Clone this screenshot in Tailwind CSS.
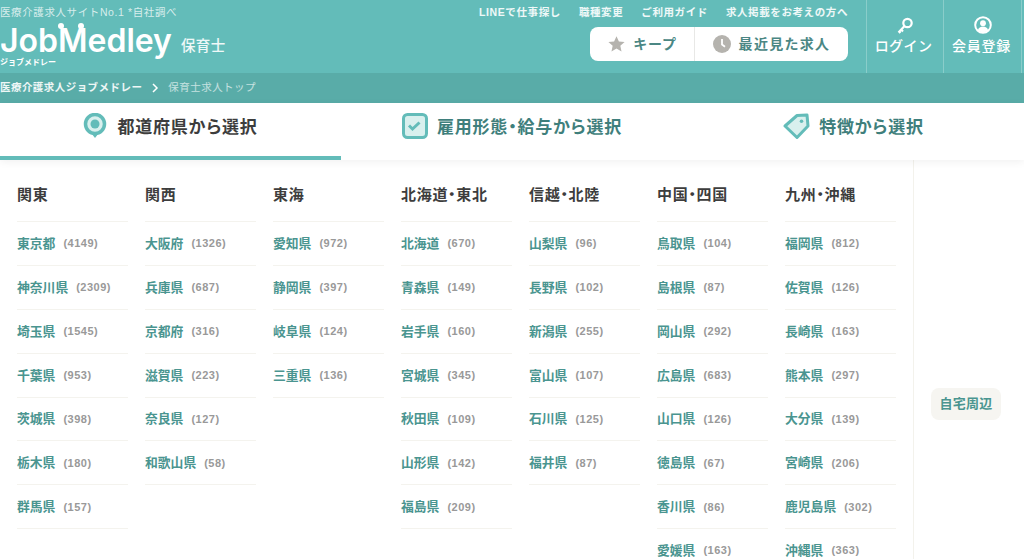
<!DOCTYPE html>
<html lang="ja">
<head>
<meta charset="utf-8">
<script src="https://cdn.jsdelivr.net/npm/@tailwindcss/browser@4"></script>
</head>
<body class="bg-white font-['Liberation_Sans','Noto_Sans_CJK_JP',sans-serif]">
<div class="w-[1024px] h-[559px] overflow-hidden flex flex-col">
  <header class="h-[73px] shrink-0 bg-[#63bcb9] flex text-white">
    <div class="w-[475px] shrink-0">
      <p class="text-[10.5px] leading-none pt-[7px] text-white/75 tracking-[0.6px] whitespace-nowrap">医療介護求人サイトNo.1 *自社調べ</p>
      <div class="flex items-end mt-[6px] h-[34px]">
        <span class="relative font-['Inter',sans-serif] font-semibold text-[32px] leading-[34px] whitespace-nowrap">JobMedley<span class="absolute left-[58px] top-[-1px] w-[6px] h-[6px] rounded-full bg-white"></span><span class="absolute left-[78px] top-[-1px] w-[6px] h-[6px] rounded-full bg-white"></span></span>
        <span class="ml-[9px] mb-[3px] text-[14.5px] leading-[18px] font-medium text-white/90 tracking-[0.4px]">保育士</span>
      </div>
      <p class="text-[8px] leading-none font-bold mt-[1px] whitespace-nowrap">ジョブメドレー</p>
    </div>
    <div class="w-[373px] shrink-0 flex flex-col items-end">
      <nav class="flex gap-[18px] pt-[7px] text-[10.5px] leading-[11px] font-bold tracking-[0.6px] text-white/90 whitespace-nowrap">
        <a>LINEで仕事探し</a><a>職種変更</a><a>ご利用ガイド</a><a>求人掲載をお考えの方へ</a>
      </nav>
      <div class="mt-[9px] w-[258px] h-[34px] bg-white rounded-[8px] flex text-[14px] font-bold text-[#4b8784] tracking-[0.8px]">
        <div class="w-[105px] flex items-center justify-center gap-[7px] border-r border-[#e8e8e6]">
          <svg class="w-[19px] h-[18px]" viewBox="0 0 24 24" fill="#b5b3ae"><path d="M12 1.500l3.200 7 7.600.8-5.700 5.100 1.600 7.600-6.700-3.900-6.700 3.900 1.600-7.600L1.200 9.300l7.600-.8z"/></svg>
          <span>キープ</span>
        </div>
        <div class="flex-1 flex items-center justify-center gap-[8px]">
          <svg class="w-[18px] h-[18px]" viewBox="0 0 18 18"><circle cx="9" cy="9" r="9" fill="#b5b3ae"/><path d="M9 4v5.500l3 2.200" fill="none" stroke="#fff" stroke-width="1.800"/></svg>
          <span class="tracking-[1.3px]">最近見た求人</span>
        </div>
      </div>
    </div>
    <div class="w-[18px] shrink-0"></div>
    <div class="w-[77px] shrink-0 border-l border-white/25 flex flex-col items-center">
      <svg class="w-[18px] h-[18px] mt-[16px] ml-[-1px]" viewBox="0 0 18 18" fill="none" stroke="#fff" stroke-width="2.200"><circle cx="11.500" cy="7" r="4.200"/><path d="M8.300 10.200L2.500 16.500M5 13.500l2 2M2.800 15.300l1.600 1.700"/></svg>
      <span class="text-[14px] leading-[18px] mt-[3px] mr-[3px] font-medium tracking-[0.4px] whitespace-nowrap">ログイン</span>
    </div>
    <div class="w-[79px] shrink-0 border-x border-white/25 flex flex-col items-center">
      <svg class="w-[18px] h-[18px] mt-[16px]" viewBox="0 0 18 18"><circle cx="9" cy="9" r="7.800" fill="none" stroke="#fff" stroke-width="2"/><circle cx="9" cy="7.200" r="2.900" fill="#fff"/><path d="M3.800 14.500c.7-3 2.800-4 5.200-4s4.500 1 5.200 4C12.500 16.500 5.500 16.500 3.800 14.500z" fill="#fff"/></svg>
      <span class="text-[14px] leading-[18px] mt-[3px] mr-[2px] font-medium tracking-[0.7px] whitespace-nowrap">会員登録</span>
    </div>
  </header>

  <div class="h-[30px] shrink-0 bg-[#59aca8] flex items-center text-[10.5px] tracking-[0.45px] whitespace-nowrap">
    <span class="font-bold text-white/90">医療介護求人ジョブメドレー</span>
    <svg class="w-[8px] h-[10px] mx-[9px]" viewBox="0 0 8 10" fill="none" stroke="#fff" stroke-width="1.500"><path d="M2 1l4 4-4 4"/></svg>
    <span class="text-white/65">保育士求人トップ</span>
  </div>

  <nav class="h-[57px] shrink-0 flex bg-white relative z-10 shadow-[0_2px_8px_rgba(0,0,0,0.06)] text-[17px] font-bold tracking-[0.8px] whitespace-nowrap [font-feature-settings:'palt']">
    <div class="w-[341px] flex items-start justify-center gap-[10px] pt-[10px] border-b-4 border-[#63bcb9] text-[#3d3d3d]">
      <svg class="w-[24px] h-[26px]" viewBox="0 0 24 26"><circle cx="12" cy="11" r="9.500" fill="#d9f0ee" stroke="#63bcb9" stroke-width="3.500"/><circle cx="12" cy="11" r="4.500" fill="#63bcb9"/><path d="M8.500 20.500h7l-3.500 4.500z" fill="#63bcb9"/></svg>
      <span class="leading-[29px]">都道府県から選択</span>
    </div>
    <div class="w-[342px] flex items-start justify-center gap-[9px] pt-[10px] text-[#3f7f7c]">
      <svg class="w-[26px] h-[26px]" viewBox="0 0 26 26"><rect x="1.500" y="1.500" width="23" height="23" rx="4" fill="#d9f0ee" stroke="#63bcb9" stroke-width="3"/><path d="M7 12.500l3.500 3.500 7-6.500" fill="none" stroke="#63bcb9" stroke-width="3"/></svg>
      <span class="leading-[29px]">雇用形態・給与から選択</span>
    </div>
    <div class="w-[341px] flex items-start justify-center gap-[9px] pt-[10px] text-[#3f7f7c]">
      <svg class="w-[27px] h-[27px]" viewBox="0 0 27 27"><path d="M14 2.500l10-.5 1 11-11 11.500L2 13z" fill="#d9f0ee" stroke="#63bcb9" stroke-width="3" stroke-linejoin="round"/><circle cx="18.500" cy="8.300" r="1.800" fill="#63bcb9"/></svg>
      <span class="leading-[29px]">特徴から選択</span>
    </div>
  </nav>

  <main class="flex flex-1 min-h-0">
    <div class="w-[914px] shrink-0 flex gap-[17px] pl-[17px] border-r border-[#f3f2ec] text-[12.8px]">

      <section class="w-[111px] shrink-0">
        <h2 class="h-[62px] border-b border-[#f4f3ee] pt-[24px] text-[15px] leading-[22px] font-bold text-[#3d3d3d] tracking-[0.7px] [font-feature-settings:'palt']">関東</h2>
        <ul>
          <li class="h-[43.9px] border-b border-[#f4f3ee] flex items-center gap-[8px] font-bold text-[#4a9590] whitespace-nowrap">東京都<span class="text-[11px] tracking-[0.5px] text-[#999]">(4149)</span></li>
          <li class="h-[43.9px] border-b border-[#f4f3ee] flex items-center gap-[8px] font-bold text-[#4a9590] whitespace-nowrap">神奈川県<span class="text-[11px] tracking-[0.5px] text-[#999]">(2309)</span></li>
          <li class="h-[43.9px] border-b border-[#f4f3ee] flex items-center gap-[8px] font-bold text-[#4a9590] whitespace-nowrap">埼玉県<span class="text-[11px] tracking-[0.5px] text-[#999]">(1545)</span></li>
          <li class="h-[43.9px] border-b border-[#f4f3ee] flex items-center gap-[8px] font-bold text-[#4a9590] whitespace-nowrap">千葉県<span class="text-[11px] tracking-[0.5px] text-[#999]">(953)</span></li>
          <li class="h-[43.9px] border-b border-[#f4f3ee] flex items-center gap-[8px] font-bold text-[#4a9590] whitespace-nowrap">茨城県<span class="text-[11px] tracking-[0.5px] text-[#999]">(398)</span></li>
          <li class="h-[43.9px] border-b border-[#f4f3ee] flex items-center gap-[8px] font-bold text-[#4a9590] whitespace-nowrap">栃木県<span class="text-[11px] tracking-[0.5px] text-[#999]">(180)</span></li>
          <li class="h-[43.9px] border-b border-[#f4f3ee] flex items-center gap-[8px] font-bold text-[#4a9590] whitespace-nowrap">群馬県<span class="text-[11px] tracking-[0.5px] text-[#999]">(157)</span></li>
        </ul>
      </section>

      <section class="w-[111px] shrink-0">
        <h2 class="h-[62px] border-b border-[#f4f3ee] pt-[24px] text-[15px] leading-[22px] font-bold text-[#3d3d3d] tracking-[0.7px] [font-feature-settings:'palt']">関西</h2>
        <ul>
          <li class="h-[43.9px] border-b border-[#f4f3ee] flex items-center gap-[8px] font-bold text-[#4a9590] whitespace-nowrap">大阪府<span class="text-[11px] tracking-[0.5px] text-[#999]">(1326)</span></li>
          <li class="h-[43.9px] border-b border-[#f4f3ee] flex items-center gap-[8px] font-bold text-[#4a9590] whitespace-nowrap">兵庫県<span class="text-[11px] tracking-[0.5px] text-[#999]">(687)</span></li>
          <li class="h-[43.9px] border-b border-[#f4f3ee] flex items-center gap-[8px] font-bold text-[#4a9590] whitespace-nowrap">京都府<span class="text-[11px] tracking-[0.5px] text-[#999]">(316)</span></li>
          <li class="h-[43.9px] border-b border-[#f4f3ee] flex items-center gap-[8px] font-bold text-[#4a9590] whitespace-nowrap">滋賀県<span class="text-[11px] tracking-[0.5px] text-[#999]">(223)</span></li>
          <li class="h-[43.9px] border-b border-[#f4f3ee] flex items-center gap-[8px] font-bold text-[#4a9590] whitespace-nowrap">奈良県<span class="text-[11px] tracking-[0.5px] text-[#999]">(127)</span></li>
          <li class="h-[43.9px] border-b border-[#f4f3ee] flex items-center gap-[8px] font-bold text-[#4a9590] whitespace-nowrap">和歌山県<span class="text-[11px] tracking-[0.5px] text-[#999]">(58)</span></li>
        </ul>
      </section>

      <section class="w-[111px] shrink-0">
        <h2 class="h-[62px] border-b border-[#f4f3ee] pt-[24px] text-[15px] leading-[22px] font-bold text-[#3d3d3d] tracking-[0.7px] [font-feature-settings:'palt']">東海</h2>
        <ul>
          <li class="h-[43.9px] border-b border-[#f4f3ee] flex items-center gap-[8px] font-bold text-[#4a9590] whitespace-nowrap">愛知県<span class="text-[11px] tracking-[0.5px] text-[#999]">(972)</span></li>
          <li class="h-[43.9px] border-b border-[#f4f3ee] flex items-center gap-[8px] font-bold text-[#4a9590] whitespace-nowrap">静岡県<span class="text-[11px] tracking-[0.5px] text-[#999]">(397)</span></li>
          <li class="h-[43.9px] border-b border-[#f4f3ee] flex items-center gap-[8px] font-bold text-[#4a9590] whitespace-nowrap">岐阜県<span class="text-[11px] tracking-[0.5px] text-[#999]">(124)</span></li>
          <li class="h-[43.9px] border-b border-[#f4f3ee] flex items-center gap-[8px] font-bold text-[#4a9590] whitespace-nowrap">三重県<span class="text-[11px] tracking-[0.5px] text-[#999]">(136)</span></li>
        </ul>
      </section>

      <section class="w-[111px] shrink-0">
        <h2 class="h-[62px] border-b border-[#f4f3ee] pt-[24px] text-[15px] leading-[22px] font-bold text-[#3d3d3d] tracking-[0.7px] [font-feature-settings:'palt']">北海道・東北</h2>
        <ul>
          <li class="h-[43.9px] border-b border-[#f4f3ee] flex items-center gap-[8px] font-bold text-[#4a9590] whitespace-nowrap">北海道<span class="text-[11px] tracking-[0.5px] text-[#999]">(670)</span></li>
          <li class="h-[43.9px] border-b border-[#f4f3ee] flex items-center gap-[8px] font-bold text-[#4a9590] whitespace-nowrap">青森県<span class="text-[11px] tracking-[0.5px] text-[#999]">(149)</span></li>
          <li class="h-[43.9px] border-b border-[#f4f3ee] flex items-center gap-[8px] font-bold text-[#4a9590] whitespace-nowrap">岩手県<span class="text-[11px] tracking-[0.5px] text-[#999]">(160)</span></li>
          <li class="h-[43.9px] border-b border-[#f4f3ee] flex items-center gap-[8px] font-bold text-[#4a9590] whitespace-nowrap">宮城県<span class="text-[11px] tracking-[0.5px] text-[#999]">(345)</span></li>
          <li class="h-[43.9px] border-b border-[#f4f3ee] flex items-center gap-[8px] font-bold text-[#4a9590] whitespace-nowrap">秋田県<span class="text-[11px] tracking-[0.5px] text-[#999]">(109)</span></li>
          <li class="h-[43.9px] border-b border-[#f4f3ee] flex items-center gap-[8px] font-bold text-[#4a9590] whitespace-nowrap">山形県<span class="text-[11px] tracking-[0.5px] text-[#999]">(142)</span></li>
          <li class="h-[43.9px] border-b border-[#f4f3ee] flex items-center gap-[8px] font-bold text-[#4a9590] whitespace-nowrap">福島県<span class="text-[11px] tracking-[0.5px] text-[#999]">(209)</span></li>
        </ul>
      </section>

      <section class="w-[111px] shrink-0">
        <h2 class="h-[62px] border-b border-[#f4f3ee] pt-[24px] text-[15px] leading-[22px] font-bold text-[#3d3d3d] tracking-[0.7px] [font-feature-settings:'palt']">信越・北陸</h2>
        <ul>
          <li class="h-[43.9px] border-b border-[#f4f3ee] flex items-center gap-[8px] font-bold text-[#4a9590] whitespace-nowrap">山梨県<span class="text-[11px] tracking-[0.5px] text-[#999]">(96)</span></li>
          <li class="h-[43.9px] border-b border-[#f4f3ee] flex items-center gap-[8px] font-bold text-[#4a9590] whitespace-nowrap">長野県<span class="text-[11px] tracking-[0.5px] text-[#999]">(102)</span></li>
          <li class="h-[43.9px] border-b border-[#f4f3ee] flex items-center gap-[8px] font-bold text-[#4a9590] whitespace-nowrap">新潟県<span class="text-[11px] tracking-[0.5px] text-[#999]">(255)</span></li>
          <li class="h-[43.9px] border-b border-[#f4f3ee] flex items-center gap-[8px] font-bold text-[#4a9590] whitespace-nowrap">富山県<span class="text-[11px] tracking-[0.5px] text-[#999]">(107)</span></li>
          <li class="h-[43.9px] border-b border-[#f4f3ee] flex items-center gap-[8px] font-bold text-[#4a9590] whitespace-nowrap">石川県<span class="text-[11px] tracking-[0.5px] text-[#999]">(125)</span></li>
          <li class="h-[43.9px] border-b border-[#f4f3ee] flex items-center gap-[8px] font-bold text-[#4a9590] whitespace-nowrap">福井県<span class="text-[11px] tracking-[0.5px] text-[#999]">(87)</span></li>
        </ul>
      </section>

      <section class="w-[111px] shrink-0">
        <h2 class="h-[62px] border-b border-[#f4f3ee] pt-[24px] text-[15px] leading-[22px] font-bold text-[#3d3d3d] tracking-[0.7px] [font-feature-settings:'palt']">中国・四国</h2>
        <ul>
          <li class="h-[43.9px] border-b border-[#f4f3ee] flex items-center gap-[8px] font-bold text-[#4a9590] whitespace-nowrap">鳥取県<span class="text-[11px] tracking-[0.5px] text-[#999]">(104)</span></li>
          <li class="h-[43.9px] border-b border-[#f4f3ee] flex items-center gap-[8px] font-bold text-[#4a9590] whitespace-nowrap">島根県<span class="text-[11px] tracking-[0.5px] text-[#999]">(87)</span></li>
          <li class="h-[43.9px] border-b border-[#f4f3ee] flex items-center gap-[8px] font-bold text-[#4a9590] whitespace-nowrap">岡山県<span class="text-[11px] tracking-[0.5px] text-[#999]">(292)</span></li>
          <li class="h-[43.9px] border-b border-[#f4f3ee] flex items-center gap-[8px] font-bold text-[#4a9590] whitespace-nowrap">広島県<span class="text-[11px] tracking-[0.5px] text-[#999]">(683)</span></li>
          <li class="h-[43.9px] border-b border-[#f4f3ee] flex items-center gap-[8px] font-bold text-[#4a9590] whitespace-nowrap">山口県<span class="text-[11px] tracking-[0.5px] text-[#999]">(126)</span></li>
          <li class="h-[43.9px] border-b border-[#f4f3ee] flex items-center gap-[8px] font-bold text-[#4a9590] whitespace-nowrap">徳島県<span class="text-[11px] tracking-[0.5px] text-[#999]">(67)</span></li>
          <li class="h-[43.9px] border-b border-[#f4f3ee] flex items-center gap-[8px] font-bold text-[#4a9590] whitespace-nowrap">香川県<span class="text-[11px] tracking-[0.5px] text-[#999]">(86)</span></li>
          <li class="h-[43.9px] border-b border-[#f4f3ee] flex items-center gap-[8px] font-bold text-[#4a9590] whitespace-nowrap">愛媛県<span class="text-[11px] tracking-[0.5px] text-[#999]">(163)</span></li>
        </ul>
      </section>

      <section class="w-[111px] shrink-0">
        <h2 class="h-[62px] border-b border-[#f4f3ee] pt-[24px] text-[15px] leading-[22px] font-bold text-[#3d3d3d] tracking-[0.7px] [font-feature-settings:'palt']">九州・沖縄</h2>
        <ul>
          <li class="h-[43.9px] border-b border-[#f4f3ee] flex items-center gap-[8px] font-bold text-[#4a9590] whitespace-nowrap">福岡県<span class="text-[11px] tracking-[0.5px] text-[#999]">(812)</span></li>
          <li class="h-[43.9px] border-b border-[#f4f3ee] flex items-center gap-[8px] font-bold text-[#4a9590] whitespace-nowrap">佐賀県<span class="text-[11px] tracking-[0.5px] text-[#999]">(126)</span></li>
          <li class="h-[43.9px] border-b border-[#f4f3ee] flex items-center gap-[8px] font-bold text-[#4a9590] whitespace-nowrap">長崎県<span class="text-[11px] tracking-[0.5px] text-[#999]">(163)</span></li>
          <li class="h-[43.9px] border-b border-[#f4f3ee] flex items-center gap-[8px] font-bold text-[#4a9590] whitespace-nowrap">熊本県<span class="text-[11px] tracking-[0.5px] text-[#999]">(297)</span></li>
          <li class="h-[43.9px] border-b border-[#f4f3ee] flex items-center gap-[8px] font-bold text-[#4a9590] whitespace-nowrap">大分県<span class="text-[11px] tracking-[0.5px] text-[#999]">(139)</span></li>
          <li class="h-[43.9px] border-b border-[#f4f3ee] flex items-center gap-[8px] font-bold text-[#4a9590] whitespace-nowrap">宮崎県<span class="text-[11px] tracking-[0.5px] text-[#999]">(206)</span></li>
          <li class="h-[43.9px] border-b border-[#f4f3ee] flex items-center gap-[8px] font-bold text-[#4a9590] whitespace-nowrap">鹿児島県<span class="text-[11px] tracking-[0.5px] text-[#999]">(302)</span></li>
          <li class="h-[43.9px] border-b border-[#f4f3ee] flex items-center gap-[8px] font-bold text-[#4a9590] whitespace-nowrap">沖縄県<span class="text-[11px] tracking-[0.5px] text-[#999]">(363)</span></li>
        </ul>
      </section>
    </div>
    <aside class="flex-1 pl-[17px] pt-[228px]">
      <div class="w-[70px] h-[32px] rounded-[8px] bg-[#f6f5f1] flex items-center justify-center text-[13px] tracking-[0.3px] font-bold text-[#4a9590]">自宅周辺</div>
    </aside>
  </main>
</div>
</body>
</html>
